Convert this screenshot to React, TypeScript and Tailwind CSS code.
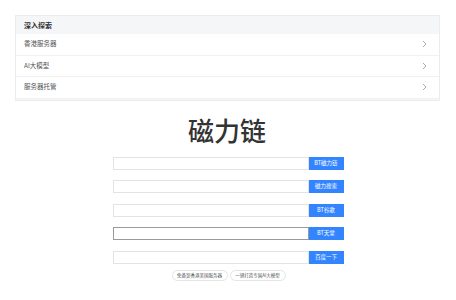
const links = ['香港服务器', 'AI大模型', '服务器托管']

const searches = [
  { label: 'BT磁力链', focused: false },
  { label: '磁力搜索', focused: false },
  { label: 'BT谷歌', focused: false },
  { label: 'BT天堂', focused: true },
  { label: '百度一下', focused: false },
]

function Chevron() {
  return (
    <svg width="5" height="8" viewBox="0 0 5 8" fill="none" className="text-gray-400">
      <path d="M1 1l3 3-3 3" stroke="currentColor" strokeWidth="0.9" />
    </svg>
  )
}

export default function App() {
  return (
    <div
      className="w-[456px] h-[300px] bg-white overflow-hidden"
      style={{ fontFamily: '"Noto Sans CJK SC", "Noto Sans", sans-serif' }}
    >
      <div className="pt-[15px] flex">
        <div className="ml-[15px] w-[425px] border border-[#ececec] bg-white">
          <div className="h-[18px] bg-[#f5f6f8] flex items-center pl-[8px] text-[7px] font-bold text-[#333]">
            深入探索
          </div>
          {links.map((l) => (
            <div
              key={l}
              className="h-[21.5px] flex items-center justify-between pl-[8px] pr-[12px] border-b border-[#f1f1f1] text-[6.5px] text-[#555]"
            >
              <span>{l}</span>
              <Chevron />
            </div>
          ))}
          <div className="h-[1px] bg-[#f5f6f8]" />
        </div>
      </div>

      <h1 className="mt-[13px] text-center text-[26px] leading-[31px] font-medium text-[#333] pr-[2px]">磁力链</h1>

      <div className="mt-[12px] w-[231px] mx-auto flex flex-col gap-[10.5px]">
        {searches.map((s) => (
          <div key={s.label} className="flex h-[13px]">
            <div
              className={
                s.focused
                  ? 'flex-1 border border-[#9a9a9a] bg-white'
                  : 'flex-1 border border-[#e3e3e3] bg-white'
              }
            />
            <button className="w-[35px] bg-[#3385ff] text-white text-[5.5px] flex items-center justify-center">
              {s.label}
            </button>
          </div>
        ))}
      </div>

      <div className="mt-[6px] flex justify-center gap-[2px] pl-[1px]">
        <span className="h-[11px] w-[56px] rounded-full border border-[#e5e5e5] text-[4.5px] text-[#555] flex items-center justify-center">
          免备案香港美国服务器
        </span>
        <span className="h-[11px] w-[56px] rounded-full border border-[#e5e5e5] text-[4.5px] text-[#555] flex items-center justify-center">
          一键打造专属AI大模型
        </span>
      </div>
    </div>
  )
}
